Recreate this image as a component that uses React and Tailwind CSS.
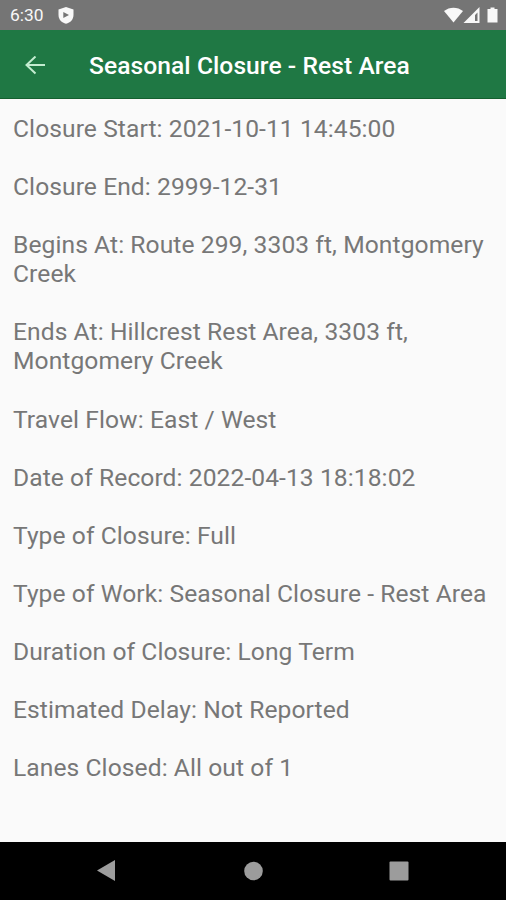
const details = [
    { label: 'Closure Start', value: '2021-10-11 14:45:00' },
    { label: 'Closure End', value: '2999-12-31' },
    { label: 'Begins At', value: 'Route 299, 3303 ft, Montgomery Creek' },
    { label: 'Ends At', value: 'Hillcrest Rest Area, 3303 ft, Montgomery Creek' },
    { label: 'Travel Flow', value: 'East / West' },
    { label: 'Date of Record', value: '2022-04-13 18:18:02' },
    { label: 'Type of Closure', value: 'Full' },
    { label: 'Type of Work', value: 'Seasonal Closure - Rest Area' },
    { label: 'Duration of Closure', value: 'Long Term' },
    { label: 'Estimated Delay', value: 'Not Reported' },
    { label: 'Lanes Closed', value: 'All out of 1' },
];

function StatusBar() {
    return (
        <div className="h-[30px] bg-[#757575] flex items-center justify-between pl-[10px] pr-[6px] shrink-0 text-[#f8f8f8]">
            <div className="flex items-center gap-[14px]">
                <span className="text-[17.4px] leading-none pt-[2px]">6:30</span>
                <svg width="16" height="18" viewBox="0 0 16 18" fill="none">
                    <path d="M8 1L15.500 3.500V9C15.500 13.500 12.400 16.600 8 17.800C3.600 16.600 0.500 13.500 0.500 9V3.500Z" fill="currentColor" />
                    <path d="M5.300 6L11 9L5.300 12Z" fill="#757575" />
                </svg>
            </div>
            <svg width="56" height="18" viewBox="0 0 56 18" fill="currentColor">
                <path d="M0 5C5.500 0.500 13.500 0.500 19 5L9.500 16.500Z" />
                <path fillRule="evenodd" d="M35.500 1V17H19.500ZM33.500 6.500L31 9V15H33.500Z" />
                <path d="M43.500 3H46.500V1.500H50.500V3H53.500V16.500H43.500Z" />
            </svg>
        </div>
    );
}

function AppBar() {
    return (
        <header className="h-[69px] bg-[#1f7844] border-b border-[#14602f] flex items-center pl-[25px] pt-[3px] gap-[44px] shrink-0 text-white">
            <button aria-label="Back" className="text-[#c3ecd0]">
                <svg width="20" height="20" viewBox="0 0 20 20" fill="none" stroke="currentColor" strokeWidth="2">
                    <path d="M20 9H2M10.500 0.500L1.500 9L10.500 17.500" />
                </svg>
            </button>
            <h1 className="text-[24.6px] font-medium tracking-[0.07px] whitespace-nowrap pt-[2px]">Seasonal Closure - Rest Area</h1>
        </header>
    );
}

function NavBar() {
    return (
        <nav className="h-[58px] bg-black flex items-center justify-between pl-[96px] pr-[97px] shrink-0 text-[#9c9c9c]">
            <svg width="20" height="22" viewBox="0 0 20 22" fill="currentColor"><path d="M1 10.500L19 0V21Z" /></svg>
            <svg width="20" height="20" viewBox="0 0 20 20" fill="currentColor"><circle cx="10.500" cy="10" r="9.300" /></svg>
            <svg width="20" height="20" viewBox="0 0 20 20" fill="currentColor"><rect x="0.500" y="0.500" width="19" height="19" rx="1" /></svg>
        </nav>
    );
}

export default function App() {
    return (
        <div className="w-full h-screen flex flex-col overflow-hidden bg-[#fafafa] font-[Roboto,sans-serif]">
            <StatusBar />
            <AppBar />
            <main className="flex-1 px-[13px] pt-[15px] flex flex-col gap-[29px] text-[24.6px] leading-[29.1px] tracking-[0.08px] text-[#777]">
                {details.map(d => (
                    <p key={d.label}>{d.label}: {d.value}</p>
                ))}
            </main>
            <NavBar />
        </div>
    );
}
